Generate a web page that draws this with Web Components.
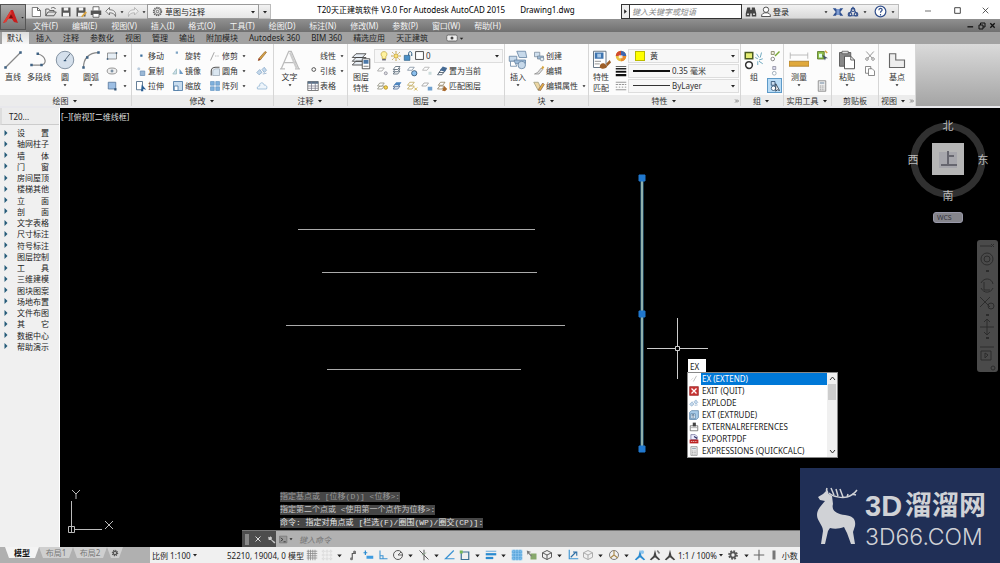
<!DOCTYPE html>
<html lang="zh-CN">
<head>
<meta charset="utf-8">
<title>T20天正建筑软件 V3.0 For Autodesk AutoCAD 2015 - Drawing1.dwg</title>
<style>
html,body{margin:0;height:100%}
body{font:8px/11px "Noto Sans","Noto Sans CJK SC",sans-serif;color:#333;background:#f0f0f0;overflow:hidden}
</style>
</head>
<body>
<cad-app></cad-app>
<script>
const BASE = `*{box-sizing:border-box}
button,input,select{font:inherit;color:inherit;margin:0;padding:0;border:0;background:none;border-radius:0;outline:0}
button{display:flex;align-items:center;white-space:nowrap}a{color:inherit;text-decoration:none}
select{appearance:none}ul{list-style:none;margin:0;padding:0}`;

// Every icon is drawn on a 16 x 16 grid.
const LN = 'fill="none" stroke="#555" stroke-width="1.2"';
const sheet = (x, y, c) => `<path d="M${x} ${y + 4}l3-4h6l-3 4z" fill="#fff" stroke="${c}" stroke-width="1"/>`;
const ICONS = {
  caret: '<path d="M4 6h8l-4 5z" fill="#222"/>',
  logo: '<path d="M8 1l2 0 5 13-4-1-2-3H5L3 13l-3 1z" fill="#c81e1e"/><path d="M8 1L0 14l3-1 2-3 4-1z" fill="#e23b33"/><path d="M8 5l2 4H6z" fill="#7a0c0c"/>',
  new: `<path d="M3 2h7l4 4v8H3z" fill="#fff" stroke="#555"/><path d="M10 2v4h4" ${LN}/>`,
  open: `<path d="M1 13V4h4l1 2h6v2M1 13l3-5h11l-3 5z" ${LN}/><path d="M8 3c3-2 5-1 6 1" ${LN}/>`,
  save: `<path d="M2 2h12v12H2z" fill="#555"/><path d="M5 2h6v4H5zM4 9h8v5H4z" fill="#f4f4f4"/>`,
  saveas: `<path d="M2 2h12v12H2z" fill="#555"/><path d="M5 2h6v4H5zM4 9h8v5H4z" fill="#f4f4f4"/><path d="M8 14l6-7 2 2-6 6z" fill="#d9a441"/>`,
  print: `<path d="M4 6V1h8v5M4 10h8v5H4z" fill="#fff" stroke="#444"/><path d="M1 6h14v6h-3v-2H4v2H1z" fill="#555"/>`,
  undo: `<path d="M1 7l5-5v3c6 0 9 3 8 9-1-3-3-5-8-5v3z" fill="#eee" stroke="#555"/>`,
  redo: `<path d="M15 7l-5-5v3C4 5 1 8 2 14c1-3 3-5 8-5v3z" fill="#eee" stroke="#aaa"/>`,
  gear: `<circle cx="8" cy="8" r="6" fill="none" stroke="#666" stroke-width="1.6" stroke-dasharray="2 1.2"/><circle cx="8" cy="8" r="4.6" ${LN}/><circle cx="8" cy="8" r="1.8" ${LN}/>`,
  cog: `<circle cx="8" cy="8" r="5" fill="none" stroke="#555" stroke-width="3" stroke-dasharray="2.2 1.7"/><circle cx="8" cy="8" r="3.4" fill="none" stroke="#555" stroke-width="2.4"/>`,
  binoc: '<path d="M3 2h4v3h2V2h4l2 8v4H9v-4H7v4H1v-4z" fill="#444"/><path d="M3 10h2v2H3zM11 10h2v2h-2z" fill="#fff"/>',
  person: `<circle cx="8" cy="5" r="3.6" fill="#fff" stroke="#444" stroke-width="1.2"/><path d="M2 14c0-4 3-5 6-5s6 1 6 5z" fill="#fff" stroke="#444" stroke-width="1.2"/>`,
  exch: '<path d="M1 3h4l3 3 3-3h4l-4 5 4 5h-4l-3-3-3 3H1l4-5z" fill="#2e4f8f"/><path d="M6 4h4v8H6z" fill="#7d9bd0"/>',
  tri: '<g fill="none" stroke="#33508c" stroke-width="1.5"><path d="M8 2l6 11H2z"/><circle cx="8" cy="5" r="2.4"/><circle cx="4" cy="11" r="2.4"/><circle cx="12" cy="11" r="2.4"/></g>',
  help: '<circle cx="8" cy="8" r="6.6" fill="#fff" stroke="#33508c" stroke-width="1.5"/><path d="M6 6.500c0-3 4-3 4-.5 0 1.500-2 1.500-2 3.500M8 11v2" fill="none" stroke="#33508c" stroke-width="1.5"/>',
  min: '<path d="M2 8h12" stroke="#333" stroke-width="1.4"/>',
  max: '<path d="M3 3h10v10H3z" fill="none" stroke="#333" stroke-width="1.6"/>',
  close: '<path d="M3 3l10 10M13 3L3 13" stroke="#333" stroke-width="1.4"/>',
  mmin: '<path d="M1 11h13" stroke="#111" stroke-width="3"/>',
  mres: '<path d="M5 6V2h9v8h-4" fill="none" stroke="#111" stroke-width="2"/><path d="M2 6h8v8H2z" fill="none" stroke="#111" stroke-width="2"/>',
  mclose: '<path d="M3 3l10 10M13 3L3 13" stroke="#111" stroke-width="3"/>',
  line: '<path d="M2 14L14 2" stroke="#888"/><path d="M1 13h2v2H1zM13 1h2v2h-2z" fill="#3f6283"/>',
  pline: '<path d="M2 12h7c6 0 5-7-2-9" fill="none" stroke="#888"/><path d="M1 11h2v2H1zM6 2h2v2H6zM9 11h2v2H9z" fill="#3f6283"/>',
  circle: '<circle cx="8" cy="8" r="7" fill="#d5e0ec" stroke="#8493a3" stroke-width=".8"/><path d="M8 8l4-5" stroke="#456" stroke-width=".7"/><path d="M7 8h2v1H7z" fill="#357"/>',
  arc: '<path d="M2 14C2 7 6 2 14 2" fill="none" stroke="#888"/><path d="M1 13h2v2H1zM4 5h2v2H4zM13 1h2v2h-2z" fill="#3f6283"/>',
  rect: '<path d="M2 4h12v8H2z" fill="#e6eef5" stroke="#777"/><path d="M1 11h2v2H1zM13 3h2v2h-2z" fill="#357"/>',
  ellipse: '<ellipse cx="8" cy="8" rx="6.500" ry="4" fill="#eee" stroke="#777"/><path d="M8 6v4M6 8h4" stroke="#357"/>',
  hatch: '<path d="M3 3h10v9H3z" fill="#9dbfe4" stroke="#4f6f94"/><path d="M11 11h3v3h-3z" fill="#357"/>',
  move: '<path d="M7 6h3v3H7z" fill="#3d6f9d"/>',
  rotate: '<path d="M5 2h3v3H5z" fill="#7fa5c5"/>',
  trim: '<path d="M2 14L7 3" stroke="#888"/><path d="M8 8h6" stroke="#aaa" stroke-dasharray="2 1"/>',
  copy: '<circle cx="5" cy="5" r="2" fill="#bcd"/><path d="M7 8h6v6H7z" fill="#9ab8d6" stroke="#6b8fb5"/>',
  mirror: '<path d="M1 12l5-7v7z" fill="#cfe0ef" stroke="#9bb"/><path d="M15 12l-5-7v7z" fill="#6e9bc5"/>',
  fillet: '<path d="M3 14V8c0-3 3-5 6-5h5" fill="none" stroke="#555" stroke-width="1.5"/><path d="M5 14V9c0-3 2-4 5-4h4v9z" fill="#dbe7f1" stroke="#789" stroke-width=".7"/>',
  stretch: '<path d="M2 2h8v11H2z" fill="#fff" stroke="#357"/><path d="M9 6l6 7-4-1v3H8z" fill="#2a5e94"/>',
  scale: '<path d="M2 2h12v12H2z" fill="#c8dcee" stroke="#3d6f9d"/><path d="M3 8h5v6H3z" fill="#fff" stroke="#3d6f9d"/>',
  array: '<path d="M2 2h5v5H2zM9 2h5v5H9zM2 9h5v5H2zM9 9h5v5H9z" fill="#7fb0dc" stroke="#4f86b8" stroke-width=".7"/>',
  erase: '<path d="M3 14l1-3 8-9 2 1-8 10z" fill="#d6a24a" stroke="#8a5a1a" stroke-width=".8"/><path d="M3 14l1-3 2 2z" fill="#933"/>',
  explode: '<path d="M1 10l4-4 3 4-4 3zM8 6l3-3 3 4-3 3z" fill="#c5d9ec" stroke="#85a7c7"/><path d="M9 12l5-1" stroke="#85a7c7"/>',
  offset: '<path d="M2 12h12c2-4-2-6-3-5-1-5-7-4-6 1-3 0-4 2-3 4z" fill="#eef5fb" stroke="#8db2d2"/>',
  text: '<path d="M1 15L7 1h2l6 14M3.500 10h9M0 15h4M12 15h4" fill="none" stroke="#bbb"/><path d="M8 2l5.500 13" stroke="#ccc" stroke-width="1.6"/>',
  leader: '<circle cx="9" cy="6" r="2.500" fill="none" stroke="#444" stroke-width="1.2"/>',
  table: '<path d="M1 2h14v12H1z" fill="#fff" stroke="#555"/><path d="M1 2h14v3H1z" fill="#59718a"/><path d="M1 8h14M1 11h14M6 2v12M11 2v12" stroke="#778" fill="none"/>',
  layerprop: '<g fill="#e8eef4" stroke="#444" stroke-width=".7"><path d="M1 12l3-3h8l-3 3zM1 9l3-3h8L9 9zM1 6l3-3h8L9 6z"/><path d="M9 7h6v8H9z" fill="#fff"/></g><path d="M10 8h4v3h-4z" fill="#4b78a8"/><path d="M10 13h4" stroke="#555" stroke-width=".6"/>',
  bulb: '<path d="M8 1c-5 0-6 5-3 8v3h6V9c3-3 2-8-3-8z" fill="#fff3a0" stroke="#b39520"/><path d="M5 13h6v2H5z" fill="#556"/>',
  sun: '<circle cx="8" cy="8" r="3.500" fill="#fbe27a" stroke="#a88116"/><path d="M8 0v3M8 13v3M0 8h3M13 8h3M2 2l2 2M12 12l2 2M14 2l-2 2M4 12l-2 2" stroke="#a88116" stroke-width="1.2"/>',
  lock: '<path d="M2 7h9v8H2z" fill="#4b90c7" stroke="#24577e"/><path d="M9 7V4c0-4 5-4 5 0v4" fill="none" stroke="#24577e" stroke-width="1.6"/>',
  sq: '<path d="M1 1h14v14H1z" fill="#fff" stroke="#333" stroke-width="1.5"/>',
  l1: sheet(2, 4, '#999') + '<circle cx="13" cy="11" r="2" fill="#ddd" stroke="#889"/>',
  l2: sheet(3, 8, '#456') + sheet(3, 5, '#456') + sheet(3, 2, '#456'),
  l3: sheet(2, 3, '#789') + '<circle cx="11" cy="11" r="3.500" fill="#8cc0ee" stroke="#246"/>',
  l4: sheet(2, 3, '#aaa') + '<path d="M10 9h4v4h-4z" fill="#cdd"/>',
  l5: sheet(2, 9, '#345') + sheet(4, 6, '#345') + '<path d="M5 7l4-5 6 2-3 5z" fill="#456a94"/>',
  l6: sheet(2, 8, '#887') + sheet(2, 4, '#887') + '<circle cx="13" cy="10" r="2.400" fill="#f2d350" stroke="#a88116"/>',
  l7: sheet(3, 8, '#358') + sheet(3, 5, '#358') + '<path d="M4 7l3-4h7l-3 4z" fill="#4d86c0"/>',
  l8: sheet(2, 8, '#b9a050') + sheet(2, 3, '#b9a050') + '<path d="M11 10l4 4M15 10l-4 4" stroke="#c49c1c"/>',
  l9: sheet(1, 4, '#999') + '<path d="M9 9h6v5H9z" fill="#6fa0cf"/>',
  l10: sheet(2, 8, '#875') + sheet(3, 3, '#875') + '<path d="M8 14l3-6 4 4-3 3z" fill="#a8692c"/>',
  insert: '<g stroke="#5d7e9e" stroke-width=".6" fill="#c7d9ea"><path d="M7 1h7l1 5H9zM1 5h6v4H1z"/><path d="M5 8h9v3H5z" fill="#9dbbd8"/><circle cx="11" cy="12" r="3"/><path d="M2 9h3l2 4H2z" fill="#fff"/></g>',
  create: '<path d="M2 3h7v6H2z" fill="#cfdfee" stroke="#789"/><path d="M6 8h8v4H6z" fill="#9bb8d5" stroke="#789"/><circle cx="12" cy="12" r="2.500" fill="#e6eef5" stroke="#789"/>',
  edit: '<path d="M2 12l4-2 5-6 2 2-5 6z" fill="#ddd" stroke="#888"/><path d="M11 4l2-3 2 2-2 3z" fill="#d7a53e"/>',
  attr: '<path d="M1 3h6l4 9-4 2z" fill="#eed7a4" stroke="#997"/><path d="M7 13l6-9 2 2-5 8z" fill="#e8b040" stroke="#865"/>',
  match: '<path d="M2 1h10v13H2z" fill="#fff" stroke="#567" stroke-width=".7"/><path d="M3 2h7v5H3z" fill="#3f75b0"/><path d="M5 3h3v3H5z" fill="#a7c7e7"/><path d="M3 9h5M3 11h4" stroke="#aaa"/><path d="M7 14c0-3 2-4 4-3l2 2c-2 3-5 2-6 1zM12 11l3-3 1 2-3 3z" fill="#9d5e28"/>',
  wheel: '<circle cx="8" cy="8" r="7" fill="#e9c13f"/><path d="M8 8V1a7 7 0 0 0-7 7z" fill="#d0492e"/><path d="M8 8V1a7 7 0 0 1 7 7z" fill="#3f66b0"/><path d="M8 8h7a7 7 0 0 1-7 7z" fill="#e98a2c"/><path d="M5 7h5v4H5z" fill="#fff" opacity=".8"/>',
  weights: '<path d="M1 2h14" stroke="#333"/><path d="M1 5h14" stroke="#222" stroke-width="2"/><path d="M1 9h14" stroke="#111" stroke-width="2.500"/><path d="M1 13.500h14" stroke="#111" stroke-width="3"/>',
  types: '<path d="M1 3h14M1 13h14" stroke="#777"/><path d="M1 6h14" stroke="#777" stroke-dasharray="3 1"/><path d="M1 9.500h14" stroke="#777" stroke-dasharray="2 2"/>',
  group: '<path d="M1 2h6v5H1z" fill="#e5ed72" stroke="#4c5c22" stroke-width="1.2"/><circle cx="4" cy="12" r="2.700" fill="#fff" stroke="#333" stroke-width="1.2"/><path d="M9 6l2 1M10 3l2 3M14 2l-1 4M15 7l-3 1M15 11l-3-2M11 12V9" stroke="#71aac0" stroke-width=".8"/>',
  ungroup: '<path d="M3 2h4v4H3z" fill="#eed" stroke="#775"/><circle cx="5" cy="12" r="2.400" fill="#fff" stroke="#666"/><path d="M8 8l6-6" stroke="#79a833" stroke-width="2"/>',
  gedit: '<path d="M5 2h4v4H5z" fill="#dde" stroke="#889"/><circle cx="7" cy="11" r="2.500" fill="#fff" stroke="#89a"/>',
  gsel: '<path d="M3 2h5v5H3z" fill="#cde" stroke="#246"/><circle cx="6" cy="11" r="3" fill="#fff" stroke="#246"/><path d="M9 5l5 9-3-1-2 2z" fill="#fff" stroke="#123"/>',
  measure: '<path d="M1 2v5M15 2v5M1 4h14" stroke="#aaa" stroke-width=".6"/><path d="M0 9h16v4H0z" fill="#e0a93c" stroke="#a87820" stroke-width=".6"/>',
  qsel: '<path d="M2 2h9v10H2z" fill="#8dbb45" stroke="#4e6f20"/><path d="M4 5h4v5H4z" fill="#dfe"/><path d="M8 6l4 8 1-3h3z" fill="#456"/><path d="M12 1l3 3" stroke="#d7a53e" stroke-width="2"/>',
  calc: '<path d="M3 1h10v14H3z" fill="#eee" stroke="#777"/><path d="M5 3h6v2H5z" fill="#9ab"/><path d="M5 8h6M5 10.500h6M5 13h6" stroke="#777" stroke-dasharray="1.500 1"/>',
  paste: '<path d="M2 2h9v11H2z" fill="#888" stroke="#555" stroke-width=".7"/><path d="M4 1h5v2H4z" fill="#ddd" stroke="#555" stroke-width=".6"/><path d="M6 5h5l3 3v7H6z" fill="#fff" stroke="#555" stroke-width=".8"/><path d="M11 5v3h3" fill="none" stroke="#555" stroke-width=".7"/>',
  cut: '<path d="M3 2l8 9M13 2l-8 9" stroke="#777"/><circle cx="4" cy="12" r="1.800" fill="none" stroke="#777"/><circle cx="12" cy="12" r="1.800" fill="none" stroke="#777"/>',
  copyclip: '<path d="M2 2h7v9H2z" fill="#fff" stroke="#666"/><path d="M6 5h5l3 3v6H6z" fill="#fff" stroke="#666"/>',
  base: '<path d="M2 3h5v5h7v6H2z" fill="#eee" stroke="#666" stroke-width=".9"/>',
  exit: '<path d="M1 1h14v14H1z" fill="#c93434" stroke="#8e1b1b"/><path d="M4 4l8 8M12 4l-8 8" stroke="#fff" stroke-width="2"/>',
  extend: '<path d="M3 10l4-4" stroke="#ccc"/><path d="M7 12l5-9" stroke="#999"/>',
  extrude: '<path d="M1 4l3-3h11v11l-3 3H1z" fill="#a9cbe8" stroke="#3e6d98"/><path d="M3 6h7v8H3z" fill="#e8f2fb" stroke="#3e6d98"/><path d="M6.500 13V7M5 9l1.500-2L8 9" stroke="#246" fill="none"/>',
  xref: '<path d="M2 6h12v8H2z" fill="#fff" stroke="#444"/><path d="M6 1h5v6H6z" fill="#444"/><path d="M3 9h10" stroke="#888"/>',
  pdf: '<path d="M3 1h7l3 3v5H3z" fill="#eef" stroke="#558"/><path d="M1 9h14v6H1z" fill="#b22"/><path d="M3 12h10" stroke="#fff" stroke-dasharray="2 1"/><path d="M8 4l5 3" stroke="#336" stroke-width="2"/>',
  grid: '<path d="M3 1v14M6 1v14M9 1v14M12 1v14M1 3h14M1 6h14M1 9h14M1 12h14" stroke="#888"/>',
  snap: '<path d="M3 1v14M8 1v14M13 1v14M1 3h14M1 8h14M1 13h14" stroke="#ccc" stroke-dasharray="1.500 1"/>',
  infer: '<path d="M7 13V6h4V3" fill="none" stroke="#555" stroke-width="1.500"/><circle cx="10" cy="4" r="2" fill="#777"/><circle cx="6" cy="13" r="2" fill="#777"/>',
  dyn: '<path d="M2 5h5M4.500 2v6" stroke="#2a8bd0" stroke-width="1.600"/><path d="M6 9h9v4H6z" fill="#3d9be0"/>',
  ortho: '<path d="M4 2v11h10M4 9h4v4" fill="none" stroke="#3b93d2" stroke-width="1.400"/>',
  polar: '<circle cx="8" cy="8" r="6" fill="none" stroke="#555" stroke-width="1.300"/><path d="M8 8h6M8 8l4-4" stroke="#555" stroke-width="1.200"/>',
  iso: '<path d="M2 2l12 12M8 1v14" stroke="#555" stroke-width="1.300"/><path d="M5 8l6-3" stroke="#8a8"/>',
  track: '<path d="M14 13H2L13 2" fill="none" stroke="#3b93d2" stroke-width="1.600"/>',
  osnap: '<path d="M3 4h10v10H3z" fill="none" stroke="#3b6f92" stroke-width="1.600"/><path d="M1 2h4v4H1z" fill="#79b85a"/>',
  lwt: '<path d="M1 3h14" stroke="#3b93d2"/><path d="M1 7h14" stroke="#2a8bd0" stroke-width="3"/><path d="M1 12h10" stroke="#2a8bd0" stroke-width="3"/>',
  transp: '<path d="M1 1h14v14H1z" fill="#8cc5ee"/><path d="M1 4h14M1 8h14M1 12h14M4 1v14M8 1v14M12 1v14" stroke="#3b93d2" stroke-dasharray="2 1"/>',
  cycle: '<path d="M6 6h8v8H6z" fill="#87a86c"/><path d="M1 2l6 2-3 1 4 4-1 1-4-4-1 2z" fill="#777"/>',
  cube: '<path d="M8 2l6 3v6l-6 3-6-3V5zM2 5l6 3 6-3M8 8v6" fill="none" stroke="#555" stroke-width="1.300"/>',
  cubeg: '<path d="M8 2l6 3v6l-6 3-6-3V5zM2 5l6 3 6-3M8 8v6" fill="none" stroke="#aaa" stroke-width="1.300"/>',
  ducs: '<path d="M3 1v12h12" fill="none" stroke="#3b93d2" stroke-width="1.500"/><path d="M5 11l7-7M8 4h5v5" fill="none" stroke="#2f6fa5" stroke-width="1.500"/>',
  gizmo: '<circle cx="8" cy="8" r="6" fill="none" stroke="#555"/><path d="M8 2v6l5 4M8 8l-5 4" fill="none" stroke="#a98a4c" stroke-width="1.500"/>',
  annoB: '<path d="M8 1l2 8 5 5-2 1-5-4-5 4-2-1 5-5z" fill="#2a8bd0"/><circle cx="11" cy="4" r="2.500" fill="#8cc5ee"/>',
  annoG: '<path d="M8 1l2 8 5 5-2 1-5-4-5 4-2-1 5-5z" fill="#444"/><path d="M11 2l3 4" stroke="#777" stroke-width="2"/>',
  anno: '<path d="M8 1l2 8 5 5-2 1-5-4-5 4-2-1 5-5z" fill="#444"/>',
  plus: '<path d="M8 1v14M1 8h14" stroke="#666" stroke-width="1.500"/>',
  bar: '<path d="M6 2h4v12H6z" fill="#777"/>',
  wrench: '<path d="M2 3l3 1 1-2 3 3-1 3 7 5-2 2-6-6-4 0z" fill="#ccc"/>',
  xl: '<path d="M3 3l10 10M13 3L3 13" stroke="#ddd" stroke-width="2"/>',
  prompt: '<path d="M1 2h13v12H1z" fill="#999" stroke="#666"/><path d="M3 5l4 3-4 3M8 12h4" fill="none" stroke="#333" stroke-width="1.500"/>',
  rec: '<rect x="1" y="4" width="14" height="8" rx="2" fill="#eee" stroke="#555"/><circle cx="8" cy="8" r="2" fill="#444"/>',
  launch: '<path d="M3 4l4 4-4 4M8 4l4 4-4 4" fill="none" stroke="#333" stroke-width="1.600"/>',
  play: '<path d="M5 3l6 5-6 5z" fill="#222"/>',
  item: '<path d="M5 2l6 6-6 6z" fill="#245a78"/>', none: ''
};

function define(name, html, setup) {
  const t = document.createElement('template');
  t.innerHTML = html;
  customElements.define(name, class extends HTMLElement {
    connectedCallback() {
      if (this.shadowRoot) return;
      const root = this.attachShadow({mode: 'open'});
      const style = document.createElement('style');
      style.textContent = BASE;
      root.append(style, t.content.cloneNode(true));
      if (setup) setup(this, root);
    }
  });
}

define('cad-icon', `<style>:host{display:block;width:var(--s,12px);height:var(--s,12px);flex:none}svg{display:block;width:100%;height:100%}</style>
<svg viewBox="0 0 16 16" aria-hidden="true"></svg>`, (el, r) => {
  if (el.getAttribute('size')) el.style.setProperty('--s', el.getAttribute('size') + 'px');
  r.querySelector('svg').innerHTML = ICONS[el.getAttribute('name')] || '';
});

// Small icon, with a label and a drop-down arrow when asked for.
define('tool-button', `<style>:host{display:block}button{height:15px}
.i{width:15px;display:grid;place-items:center}.c{margin-left:3px}:host([on]) button{background:#b9dcf6;outline:1px solid #5d9ac8;outline-offset:-1px}</style>
<button type="button"><span class="i"></span><span class="t"></span></button>`, (el, r) => {
  const b = r.querySelector('button');
  r.querySelector('.i').innerHTML = `<cad-icon name="${el.getAttribute('icon')}"></cad-icon>`;
  const l = el.getAttribute('label');
  if (l) r.querySelector('.t').textContent = l;
  else b.setAttribute('aria-label', el.getAttribute('icon'));
  if (el.hasAttribute('drop')) b.insertAdjacentHTML('beforeend', '<cad-icon class="c" name="caret" size="6"></cad-icon>');
});

define('big-button', `<style>:host{display:block;flex:none;width:26px}
button{width:100%;flex-direction:column;justify-content:flex-start;height:45px}.t{line-height:11px}
.i{height:23px;display:grid;place-items:center}</style>
<button type="button"><span class="i"></span><span class="t"></span></button>`, (el, r) => {
  r.querySelector('.i').innerHTML = `<cad-icon name="${el.getAttribute('icon')}" size="20"></cad-icon>`;
  r.querySelector('.t').innerHTML = el.getAttribute('label').split(' ').join('<br>');
  if (el.hasAttribute('drop')) r.querySelector('button').insertAdjacentHTML('beforeend', '<cad-icon name="caret" size="6"></cad-icon>');
});

define('tool-stack', `<style>:host{display:flex;flex-direction:column;flex:none}</style><slot></slot>`);

define('ribbon-panel', `<style>:host{display:flex;flex-direction:column;flex:none;background:#fcfcfc;border-right:1px solid #d6d6d6}
.b{flex:1;display:flex;padding-top:4px}footer{height:11px;background:#ececec;display:flex;align-items:center;justify-content:center}
.sp{flex:1;display:flex;justify-content:flex-end}cad-icon{margin-left:2px}</style>
<div class="b"><slot></slot></div><footer><span class="sp"></span><span class="t"></span><span class="sp e"></span></footer>`, (el, r) => {
  r.querySelector('.t').textContent = el.getAttribute('label');
  if (!el.hasAttribute('plain')) r.querySelector('.t').insertAdjacentHTML('afterend', '<cad-icon name="caret" size="8"></cad-icon>');
  if (el.hasAttribute('launch')) r.querySelector('.e').innerHTML = '<cad-icon name="launch" size="6"></cad-icon>';
});

define('combo-box', `<style>:host{display:flex;align-items:center;height:14px;background:#f7f7f7;border:1px solid #ddd;padding:0 1px 0 4px;gap:2px}
select{flex:1;min-width:0;height:12px;line-height:12px}</style><slot></slot><select><option></option></select><cad-icon name="caret" size="8"></cad-icon>`, (el, r) => {
  r.querySelector('option').textContent = el.getAttribute('value');
  r.querySelector('select').setAttribute('aria-label', el.getAttribute('label'));
});

define('title-bar', `<style>:host{display:flex;align-items:flex-end;height:19px;background:#fff;color:#222}
.q,.info{display:flex;align-items:center;height:15px;background:linear-gradient(#f2f2f2,#d9d9d9);border:1px solid #bbb;border-left:0}
.q button{width:15px;height:13px;justify-content:center}.q button.c{width:7px}
.q{padding-left:2px}combo-box{width:112px;height:15px;border-color:#999;background:linear-gradient(#fafafa,#e6e6e6)}
.q button.m{width:11px}
h1{flex:1;margin:0;font-size:8px;font-weight:400;line-height:19px;height:19px;display:flex;justify-content:center;gap:15px;white-space:nowrap;color:#000}
.s{display:flex;height:15px;border:1px solid #333}.s span{width:8px;display:grid;place-items:center;background:#eee;border-right:1px solid #333}
input{width:111px;padding-left:2px;font-style:italic}input::placeholder{color:#888;opacity:1}
.info{width:157px;padding:0 1px}.info button{width:15px;height:13px;justify-content:center}.info a{flex:1}.info .c{width:9px}.info .h{margin-left:4px}
.w{display:flex;width:101px;height:17px;padding-left:15px}.w button{width:29px;justify-content:center}</style>
<div class="q"></div>
<h1><span>T20天正建筑软件 V3.0 For Autodesk AutoCAD 2015</span><span>Drawing1.dwg</span></h1>
<div class="s"><span><cad-icon name="play" size="7"></cad-icon></span><input type="search" aria-label="搜索" placeholder="键入关键字或短语"></div>
<div class="info"></div><div class="w"></div>`, (el, r) => {
  const b = (n, s = 12, c = '') => `<button type="button" class="${c}" aria-label="${n}"><cad-icon name="${n}" size="${s}"></cad-icon></button>`;
  const c = b('caret', 6, 'c');
  r.querySelector('.q').innerHTML = ['new', 'open', 'save', 'saveas', 'print', 'undo'].map(n => b(n)).join('') + c + b('redo') + c +
    '<combo-box label="工作空间" value="草图与注释"><cad-icon name="gear" size="11"></cad-icon></combo-box>' + b('caret', 8, 'm');
  r.querySelector('.info').innerHTML = b('binoc') + b('person') + '<a href="#login">登录</a>' + c + b('exch') + b('tri') + c + b('help', 13, 'h') + c;
  r.querySelector('.w').innerHTML = b('min', 8) + b('max', 9) + b('close', 9);
});

define('menu-strip', `<style>:host{display:flex;align-items:center;height:13px;padding:0 2px 0 7px;background:linear-gradient(#909090,#707070);color:#f4f4f4}
nav{flex:1;display:flex;gap:14px}a{white-space:nowrap}button{width:11px;justify-content:center}</style><nav></nav>
<button aria-label="最小化"><cad-icon name="mmin" size="7"></cad-icon></button><button aria-label="还原"><cad-icon name="mres" size="8"></cad-icon></button><button aria-label="关闭"><cad-icon name="mclose" size="7"></cad-icon></button>`, (el, r) => {
  r.querySelector('nav').innerHTML = '文件(F) 编辑(E) 视图(V) 插入(I) 格式(O) 工具(T) 绘图(D) 标注(N) 修改(M) 参数(P) 窗口(W) 帮助(H)'.split(' ').map(s => `<a href="#menu">${s}</a>`).join('');
});

define('ribbon-tabs', `<style>:host{display:flex;height:12px;padding-left:2px;background:#a2a2a2;color:#222}
nav{display:flex}a{padding:0 6px 0 5px;line-height:12px;white-space:nowrap}a.on{background:linear-gradient(#ddd,#f8f8f8);margin-right:2px}
button{margin-left:12px}</style><nav></nav><button aria-label="最小化功能区"><cad-icon name="rec" size="12"></cad-icon><cad-icon name="caret" size="7"></cad-icon></button>`, (el, r) => {
  r.querySelector('nav').innerHTML = ['默认', '插入', '注释', '参数化', '视图', '管理', '输出', '附加模块', 'Autodesk 360', 'BIM 360', '精选应用', '天正建筑'].map((s, i) => `<a href="#tab"${i ? '' : ' class="on"'}>${s}</a>`).join('');
});

define('ribbon-bar', `<style>:host{display:flex;height:62px;background:linear-gradient(#dadada,#a4a4a4)}
.row{display:flex;align-items:center;height:15px}.w{flex:1;min-width:0;padding-right:1px}.sw{width:10px;height:10px;background:#ff0;border:1px solid #bb0;margin:0 3px 0 2px}
.ln{width:37px;height:1px;background:#333}.th{height:2px;background:#111}</style>
<ribbon-panel label="绘图" style="width:132px"><big-button icon="line" label="直线"></big-button><big-button icon="pline" label="多段线"></big-button><big-button icon="circle" label="圆" drop></big-button><big-button icon="arc" label="圆弧" drop></big-button>
<tool-stack><tool-button icon="rect" drop></tool-button><tool-button icon="ellipse" drop></tool-button><tool-button icon="hatch" drop></tool-button></tool-stack></ribbon-panel>
<ribbon-panel label="修改" style="width:142px"><tool-stack style="width:38px;padding-left:1px"><tool-button icon="move" label="移动"></tool-button><tool-button icon="copy" label="复制"></tool-button><tool-button icon="stretch" label="拉伸"></tool-button></tool-stack>
<tool-stack style="width:37px"><tool-button icon="rotate" label="旋转"></tool-button><tool-button icon="mirror" label="镜像"></tool-button><tool-button icon="scale" label="缩放"></tool-button></tool-stack>
<tool-stack style="width:47px"><tool-button icon="trim" label="修剪" drop></tool-button><tool-button icon="fillet" label="圆角" drop></tool-button><tool-button icon="array" label="阵列" drop></tool-button></tool-stack>
<tool-stack><tool-button icon="erase"></tool-button><tool-button icon="explode"></tool-button><tool-button icon="offset"></tool-button></tool-stack></ribbon-panel>
<ribbon-panel label="注释" style="width:74px"><big-button icon="text" label="文字" drop style="width:31px"></big-button><tool-stack><tool-button icon="none" label="线性" drop></tool-button><tool-button icon="leader" label="引线" drop></tool-button><tool-button icon="table" label="表格"></tool-button></tool-stack></ribbon-panel>
<ribbon-panel label="图层" style="width:157px"><big-button icon="layerprop" label="图层 特性"></big-button><tool-stack class="w">
<div class="row"><combo-box label="图层" value="0" style="flex:1"><cad-icon name="bulb" size="10"></cad-icon><cad-icon name="sun" size="10"></cad-icon><cad-icon name="lock" size="10"></cad-icon><cad-icon name="sq" size="9"></cad-icon></combo-box></div>
<div class="row"><tool-button icon="l1"></tool-button><tool-button icon="l2"></tool-button><tool-button icon="l3"></tool-button><tool-button icon="l4"></tool-button><tool-button icon="l5" label="置为当前"></tool-button></div>
<div class="row"><tool-button icon="l6"></tool-button><tool-button icon="l7"></tool-button><tool-button icon="l8"></tool-button><tool-button icon="l9"></tool-button><tool-button icon="l10" label="匹配图层"></tool-button></div></tool-stack></ribbon-panel>
<ribbon-panel label="块" style="width:84px"><big-button icon="insert" label="插入" drop></big-button><tool-stack><tool-button icon="create" label="创建"></tool-button><tool-button icon="edit" label="编辑"></tool-button><tool-button icon="attr" label="编辑属性" drop></tool-button></tool-stack></ribbon-panel>
<ribbon-panel label="特性" launch style="width:152px"><big-button icon="match" label="特性 匹配" style="width:24px"></big-button><tool-stack><tool-button icon="wheel"></tool-button><tool-button icon="weights"></tool-button><tool-button icon="types"></tool-button></tool-stack>
<tool-stack class="w"><div class="row"><combo-box label="颜色" value="黄" style="flex:1"><span class="sw"></span></combo-box></div><div class="row"><combo-box label="线宽" value="0.35 毫米" style="flex:1"><span class="ln th"></span></combo-box></div><div class="row"><combo-box label="线型" value="ByLayer" style="flex:1"><span class="ln"></span></combo-box></div></tool-stack></ribbon-panel>
<ribbon-panel label="组" style="width:43px"><big-button icon="group" label="组"></big-button><tool-stack><tool-button icon="ungroup"></tool-button><tool-button icon="gedit"></tool-button><tool-button icon="gsel" on></tool-button></tool-stack></ribbon-panel>
<ribbon-panel label="实用工具" style="width:48px"><big-button icon="measure" label="测量" drop style="width:30px"></big-button><tool-stack><tool-button icon="qsel"></tool-button><tool-button icon="none"></tool-button><tool-button icon="calc"></tool-button></tool-stack></ribbon-panel>
<ribbon-panel label="剪贴板" plain style="width:47px"><big-button icon="paste" label="粘贴" drop style="width:30px"></big-button><tool-stack><tool-button icon="cut"></tool-button><tool-button icon="copyclip"></tool-button></tool-stack></ribbon-panel>
<ribbon-panel label="视图" launch style="width:37px"><big-button icon="base" label="基点" drop style="width:36px"></big-button></ribbon-panel>`);

define('screen-menu', `<style>:host{display:block;width:60px;flex:none;background:#f0f0f0;border-right:1px solid #fff;color:#222}
header{height:17px;padding:3px 0 0 7px;border-bottom:1px solid #ccc;border-left:2px solid #ddd;background:#ececec}
ul{display:grid;grid-auto-rows:1fr;height:225px;margin-top:2px}a{display:flex;align-items:center;height:100%;padding-left:2px;gap:7px}
span{white-space:nowrap}</style><header>T20...</header><nav><ul></ul></nav>`, (el, r) => {
  r.querySelector('ul').innerHTML = '设　　置,轴网柱子,墙　　体,门　　窗,房间屋顶,楼梯其他,立　　面,剖　　面,文字表格,尺寸标注,符号标注,图层控制,工　　具,三维建模,图块图案,场地布置,文件布图,其　　它,数据中心,帮助演示'.split(',').map(s => `<li><a href="#cmd"><cad-icon name="item" size="8"></cad-icon><span>${s}</span></a></li>`).join('');
});

define('command-suggest', `<style>:host{display:block;width:149px;font-size:8px;color:#222}
input{display:block;width:18px;height:14px;padding-left:2px;background:#fff}
.l{display:flex;background:#fff;box-shadow:0 0 0 1px #888}ul{flex:1}li{height:12px;display:flex;align-items:center;line-height:12px;gap:2px;padding-left:1px;white-space:nowrap}
li span{flex:1;padding-left:1px}li.on span{background:#0078d7;color:#fff}
.sb{width:10px;background:#f0f0f0;display:flex;flex-direction:column;align-items:center;padding:2px 0}.sb i{width:8px;height:16px;background:#cdcdcd;margin:2px 0 auto}svg{display:block}</style>
<input aria-label="命令" value="EX"><div class="l"><ul role="listbox"></ul><div class="sb"><svg width="7" height="7"><path d="M1 5l2.500-3L6 5" fill="none" stroke="#333"/></svg><i></i><svg width="7" height="7"><path d="M1 2l2.500 3L6 2" fill="none" stroke="#333"/></svg></div></div>`, (el, r) => {
  r.querySelector('ul').innerHTML = [['extend', 'EX (EXTEND)'], ['exit', 'EXIT (QUIT)'], ['explode', 'EXPLODE'], ['extrude', 'EXT (EXTRUDE)'], ['xref', 'EXTERNALREFERENCES'], ['pdf', 'EXPORTPDF'], ['calc', 'EXPRESSIONS (QUICKCALC)']].map(([i, s], n) => `<li role="option"${n ? '' : ' class="on"'}><cad-icon name="${i}" size="10"></cad-icon><span>${s}</span></li>`).join('');
});

define('view-cube', `<style>:host{display:block;width:84px;text-align:center}svg{display:block}
text{font:11px "Noto Sans CJK SC",sans-serif;fill:#bdbdbd;text-anchor:middle}
button{margin:5px auto 0 27px;width:30px;height:11px;border-radius:3px;background:#85858c;color:#33333c;padding-left:3px;border:1px solid #99a;font-size:7px}</style>
<svg width="84" height="95" viewBox="0 -6 84 95"><circle cx="42" cy="42" r="34" fill="none" stroke="#303030" stroke-width="7"/><path d="M26 25h32v32H26z" fill="#b5b5b5"/><path d="M33 34h18v16H33z" fill="#a6a6ac"/>
<path d="M42 33v14M42 38h6M35 47h16" fill="none" stroke="#66666f" stroke-width="2"/><text x="42" y="12">北</text><text x="42" y="82">南</text><text x="7" y="46">西</text><text x="77" y="46">东</text></svg><button>WCS</button>`);

define('nav-bar', `<style>:host{display:block;width:21px;height:132px;background:#4a4a4a;border-radius:3px}</style>
<svg width="21" height="132" fill="none" stroke="#2c2c2c"><path d="M3 6h11M14 4l3 3M17 4l-3 3"/><circle cx="10" cy="19" r="6"/><circle cx="10" cy="19" r="3"/><path d="M9 31h3M9 75h3M9 98h3" stroke-width="2"/><path d="M4 43c3-6 11-5 12 1M4 48c3 6 10 5 12 0M7 42v8h6"/><path d="M3 57l10 10M13 57L3 67"/><circle cx="14" cy="66" r="3"/><path d="M10 79v16M3 87h14M7 82l3-3 3 3M7 92l3 3 3-3"/><path d="M3 107h14M4 111h10v9H4zM8 113l3 2-3 3z"/><circle cx="16" cy="128" r="2"/></svg>`);

define('command-line', `<style>:host{display:block;font-family:"Liberation Mono","Noto Sans CJK SC",monospace;color:#e4e4e4}
ol{list-style:none;margin:0;padding:0 0 1px 38px}li{height:13px;display:flex;align-items:center}li span{background:#464646;line-height:10px;white-space:pre}
li:first-child{color:#999}li:nth-child(2){color:#c4c4c4}
.b{display:flex;height:17px;background:#b1b1b1;border-top:1px solid #777}.g{width:34px;display:flex;align-items:center;gap:5px;background:#4d4d4d;padding-left:3px}.g i{width:4px;height:11px;background:radial-gradient(#888 1px,#4d4d4d 1px) 0 0/2px 2px}
.p{display:flex;align-items:center;padding-left:3px}input{flex:1;padding-left:5px;font:italic 8px "Noto Sans","Noto Sans CJK SC",sans-serif}input::placeholder{color:#777;opacity:1}</style>
<ol><li><span>指定基点或 [位移(D)] &lt;位移&gt;:</span></li><li><span>指定第二个点或 &lt;使用第一个点作为位移&gt;:</span></li><li><span>命令: 指定对角点或 [栏选(F)/圈围(WP)/圈交(CP)]:</span></li></ol>
<div class="b"><div class="g"><i></i><button aria-label="关闭"><cad-icon name="xl" size="8"></cad-icon></button><button aria-label="自定义"><cad-icon name="wrench" size="9"></cad-icon></button></div><div class="p"><cad-icon name="prompt" size="9"></cad-icon><cad-icon name="caret" size="6"></cad-icon></div><input aria-label="命令行" placeholder="键入命令"></div>`);

define('drawing-area', `<style>:host{display:block;position:relative;flex:1;min-width:0;background:#000;overflow:hidden}
.d{position:absolute;left:0;top:0;width:100%;height:100%}.v{position:absolute;left:1px;top:3px;color:#ddd}
view-cube{position:absolute;right:10px;top:4px}nav-bar{position:absolute;right:2px;top:132px}
.u{position:absolute;left:6px;bottom:8px}command-line{position:absolute;left:182px;right:0;bottom:0}
command-suggest{position:absolute;left:628px;top:251px}</style>
<svg class="d"><g transform="translate(-60 -108)"><path d="M298 229.500h237M322 272.500h215M286 325.500h279M327 369.500h194" stroke="#aaa"/>
<path d="M642 178v271" stroke="#1a3d52" stroke-width="4"/><path d="M642 178v271" stroke="#8fb0ac" stroke-width="2"/><path d="M639 175h6v6h-6zM639 311h6v6h-6zM639 446h6v6h-6z" fill="#2178ce" stroke="#2178ce"/>
<path d="M647 348.500h28M680 348.500h28M677.500 318v28M677.500 351v28M675.500 346.500h4v4h-4z" fill="none" stroke="#ccc"/></g></svg>
<div class="v">[−][俯视][二维线框]</div>
<svg class="u" width="52" height="54" viewBox="0 -6 52 54" fill="none" stroke="#bbb"><path d="M5.500 41V10M8 38.500h28M2.500 35.500h6v6h-6z"/><path d="M6 -1l4 4 4-4M10 3v5M39 30l8 8M47 30l-8 8"/></svg>
<view-cube></view-cube><nav-bar></nav-bar><command-suggest></command-suggest><command-line></command-line>`);

define('status-bar', `<style>:host{display:flex;height:16px;background:#f0f0f0;color:#222;align-items:center}
.tabs{width:150px;flex:none;height:16px;display:flex;background:#b0b0b0;align-items:flex-start;padding-left:5px}.tabs button{height:11px;background:#cfcfcf;color:#777;padding:0 8px;clip-path:polygon(0 0,100% 0,calc(100% - 4px) 100%,4px 100%);justify-content:center;width:34px}
.tabs .on{background:#f4f4f4;color:#111;font-weight:700}.tabs .p{width:16px;color:#444;padding:0}
.sc{margin-left:2px;width:75px}.xy{width:61px;white-space:nowrap}.m{width:16px}
.ic{display:flex;align-items:center}.ic button{width:15px;justify-content:center}.ic .c{width:11px}.ic .z{width:auto;padding:0 1px}.u{white-space:nowrap}</style>
<div class="tabs"><button class="on">模型</button><button>布局1</button><button>布局2</button><button class="p" aria-label="新建布局"><cad-icon name="cog" size="8"></cad-icon></button></div>
<button class="sc">比例 1:100<cad-icon name="caret" size="8"></cad-icon></button><span class="xy">52210, 19004, 0</span><button class="m">模型</button><div class="ic"></div><span class="u">小数</span>`, (el, r) => {
  const b = n => n === 'v' ? '<button class="c" aria-label="展开"><cad-icon name="caret" size="9"></cad-icon></button>' : `<button aria-label="${n}"><cad-icon name="${n}" size="12"></cad-icon></button>`;
  r.querySelector('.ic').innerHTML = 'grid snap v infer dyn ortho polar v iso v track osnap v lwt v transp cycle cube v ducs cubeg v gizmo v annoB annoG anno'.split(' ').map(b).join('') +
    '<button class="z">1:1 / 100%<cad-icon name="caret" size="8"></cad-icon></button>' + 'cog v plus bar'.split(' ').map(b).join('');
});

define('site-mark', `<style>:host{display:flex;align-items:flex-start;gap:7px;width:200px;height:95px;padding:19px 8px 0 17px;background:#202f56;color:#d0d2d6}
.t{display:flex;flex-direction:column;padding-top:2px}.a{display:flex;align-items:center;gap:3px;height:34px;font:700 27px/34px "Liberation Sans","Noto Sans CJK SC",sans-serif}.n{font-size:29px}.b{font:300 23px/28px Inter,sans-serif;white-space:nowrap}
svg{display:block;flex:none}</style>
<svg width="41" height="58" viewBox="0 0 41 58" fill="#d0d2d6"><path d="M1 10L6 7 9 4l3 3 3 2 1 8c-2 7 4 10 12 11s11 4 10 11l-2 6 2 12h-4l-4-11-3-6c-5 2-10 2-14 1l-2 3-3 13H4l2-13C6 38 0 34 0 28c0-6 5-10 8-14l-5-1z"/><path d="M11 6C9 4 9 3 10 1M12 6c4 4 13 5 18 4 4-1 7-3 10-7M17 8l-3-7M21 9l-2-7M26 10l-3-8M30 10l1-3M35 7l4 1" fill="none" stroke="#d0d2d6" stroke-width="1.500"/></svg>
<div class="t"><div class="a"><span class="n">3D</span><span>溜溜网</span></div><span class="b">3D66.COM</span></div>`);

define('cad-app', `<style>:host{display:flex;flex-direction:column;min-height:100vh;position:relative}
.top{display:grid;grid-template-columns:26px 1fr;grid-template-rows:19px 13px;background:linear-gradient(#fff 19px,#808080 19px)}
.app{grid-row:1/3;margin-top:4px;height:26px;background:linear-gradient(#aaa,#777);border:1px solid #555;gap:1px;padding-left:2px}
menu-strip,title-bar{min-width:0}main{flex:1;display:flex}
.edge{height:2px;background:#e8e8ec}site-mark{position:absolute;right:0;bottom:0}</style>
<div class="top"><button class="app" aria-label="应用程序菜单"><cad-icon name="logo" size="16"></cad-icon><cad-icon name="caret" size="5"></cad-icon></button><title-bar></title-bar><menu-strip></menu-strip></div>
<ribbon-tabs></ribbon-tabs><ribbon-bar></ribbon-bar><div class="edge"></div>
<main><screen-menu></screen-menu><drawing-area></drawing-area></main><status-bar></status-bar><site-mark></site-mark>`);
</script>
</body>
</html>
